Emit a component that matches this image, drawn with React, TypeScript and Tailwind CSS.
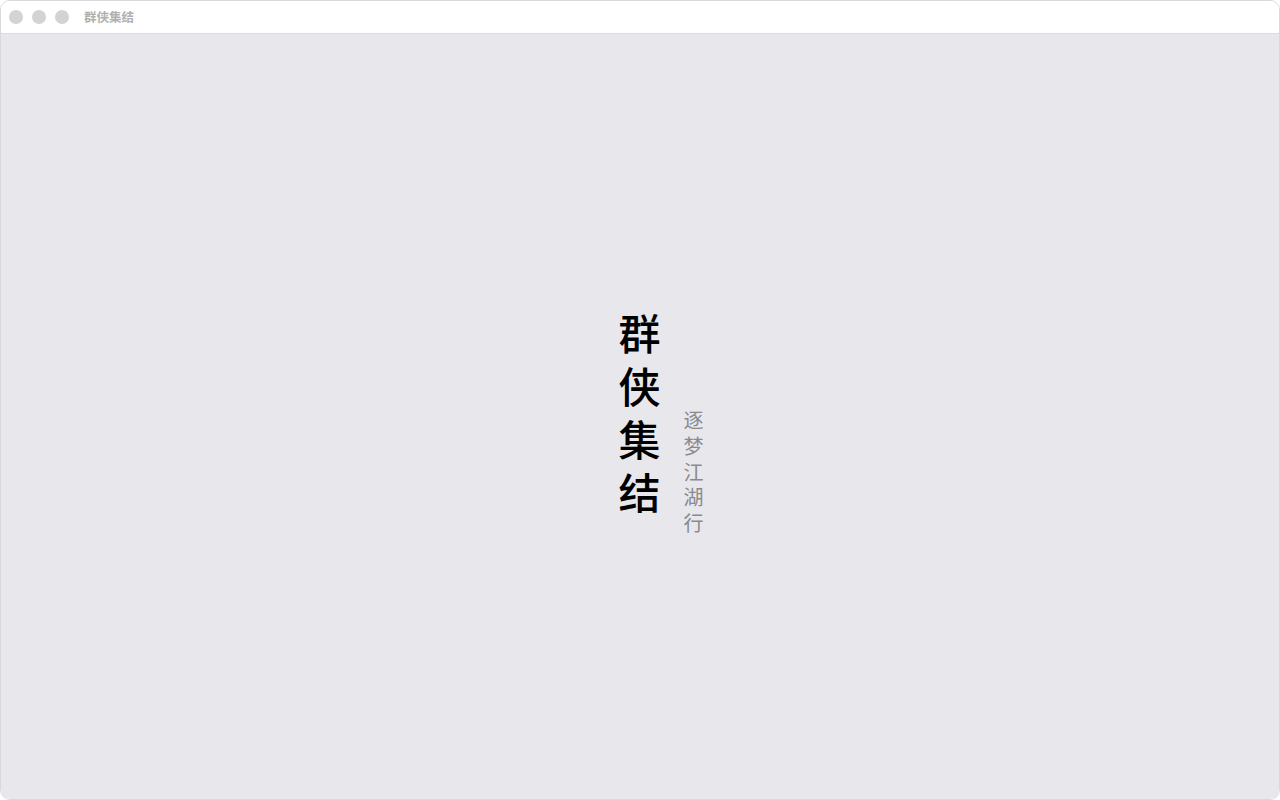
const cjk = "font-['Noto_Sans_CJK_SC','Noto_Sans',sans-serif]";

function TrafficLights() {
  return (
    <div className="flex items-center gap-[9px]">
      <span className="h-[14px] w-[14px] rounded-full bg-[#d3d3d3]" />
      <span className="h-[14px] w-[14px] rounded-full bg-[#d3d3d3]" />
      <span className="h-[14px] w-[14px] rounded-full bg-[#d3d3d3]" />
    </div>
  );
}

function Column({ text, className, cell }: { text: string; className: string; cell: string }) {
  return (
    <div className={`flex flex-col items-center ${className}`}>
      {text.split("").map((ch, i) => (
        <span key={i} className={`flex items-center justify-center ${cell}`}>
          {ch}
        </span>
      ))}
    </div>
  );
}

export default function App() {
  return (
    <div className={`h-[800px] w-[1280px] overflow-hidden bg-white ${cjk}`}>
      <div className="flex h-full flex-col overflow-hidden rounded-[10px] border border-[#d9d9dc]">
        {/* title bar */}
        <div className="flex h-[33px] shrink-0 items-center gap-[15px] border-b border-[#dcdcdf] bg-white pl-[8px]">
          <TrafficLights />
          <span className="text-[12.5px] font-bold text-[#b0b0b0]">群侠集结</span>
        </div>

        {/* content */}
        <main className="flex flex-1 items-center justify-center bg-[#e8e7ec]">
          <div className="mb-[10px] flex items-end gap-[21px] pl-[42px]">
            <Column
              text="群侠集结"
              className="text-[42px] font-medium leading-none text-black"
              cell="h-[53px] w-[44px]"
            />
            <Column
              text="逐梦江湖行"
              className="mb-[-18px] text-[20px] leading-none text-[#8a8a8e]"
              cell="h-[25.6px] w-[22px]"
            />
          </div>
        </main>
      </div>
    </div>
  );
}
